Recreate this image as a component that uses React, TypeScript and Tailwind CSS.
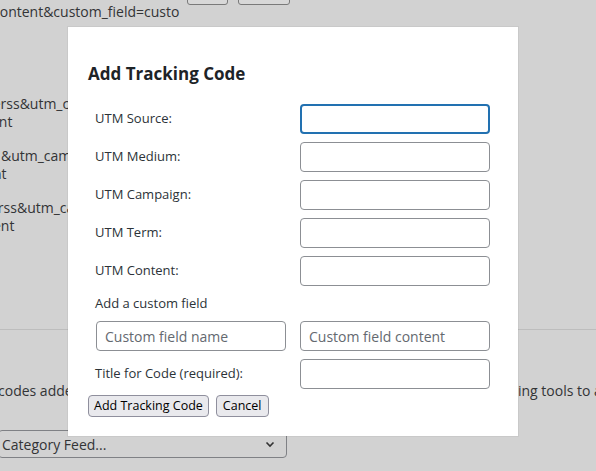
import React from "react";

const font = { fontFamily: '"Open Sans", "Noto Sans", sans-serif' };

const FieldRow = ({ label, focused }: { label: string; focused?: boolean }) => (
    <div className="flex items-center h-[30px]">
        <label className="w-[212px] shrink-0 pl-[7px] text-[13px] text-[#2c3338]">{label}</label>
        <input
            type="text"
            className={
                focused
                    ? "w-[190px] h-[30px] rounded-[4px] border-2 border-[#2271b1] bg-white outline-none"
                    : "w-[190px] h-[30px] rounded-[4px] border border-[#8c8f94] bg-white outline-none"
            }
        />
    </div>
);

const App = () => {
    return (
        <div className="relative w-[596px] h-[471px] overflow-hidden bg-[#d2d2d2] text-[#333436]" style={font}>
            {/* page behind the overlay */}
            <div className="flex items-end gap-[10px] h-[5px] ml-[187px]">
                <button className="w-[41px] h-[24px] rounded-[3px] border border-[#7a7a7a] bg-[#d8d8d8] text-[13px]">Copy</button>
                <button className="w-[52px] h-[24px] rounded-[3px] border border-[#7a7a7a] bg-[#d8d8d8] text-[13px]">Delete</button>
            </div>
            <div className="-ml-[7px] mt-[-2px] text-[14px] leading-[18px] whitespace-nowrap">content&amp;custom_field=custo</div>

            <div className="mt-[74px] flex flex-col gap-[16px] text-[14px] leading-[18px] whitespace-nowrap">
                <div className="-ml-[12px]">
                    <div>ferss&amp;utm_campaign=</div>
                    <div className="ml-[-2px]">tent</div>
                </div>
                <div className="ml-[1px]">
                    <div>&amp;utm_campaign=</div>
                    <div className="-ml-[8px]">nt</div>
                </div>
                <div className="-ml-[10px]">
                    <div>erss&amp;utm_campaign=</div>
                    <div className="ml-[-2px]">tent</div>
                </div>
            </div>

            <div className="mt-[94px] border-t border-[#bdbdbd]" />
            <div className="mt-[52px] flex text-[14px] leading-[18px] whitespace-nowrap">
                <span className="w-[518px] shrink-0 -ml-[2px]">codes added to</span>
                <span className="ml-[2px]">ing tools to add</span>
            </div>
            <div className="mt-[30px] w-[289px] h-[28px] -ml-[2px] flex items-center justify-between rounded-[4px] border border-[#7f8185] pr-[10px] text-[14px]">
                <span className="ml-[3px]">Category Feed...</span>
                <svg width="12" height="12" viewBox="0 0 12 12" fill="none" stroke="#333" strokeWidth="1.6">
                    <path d="M2.5 4.5 L6 8 L9.5 4.5" />
                </svg>
            </div>

            {/* modal */}
            <div className="absolute left-[68px] top-[27px] w-[450px] h-[409px] bg-white px-5 shadow-[0_0_0_1px_rgba(0,0,0,0.04)]">
                <h2 className="mt-[35px] text-[17px] leading-6 font-bold text-[#1d2327]">Add Tracking Code</h2>

                <form className="mt-[18px] flex flex-col">
                    <div className="flex flex-col gap-[8px]">
                        <FieldRow label="UTM Source:" focused />
                        <FieldRow label="UTM Medium:" />
                        <FieldRow label="UTM Campaign:" />
                        <FieldRow label="UTM Term:" />
                        <FieldRow label="UTM Content:" />
                    </div>

                    <div className="mt-[8px] h-[20px] flex items-center pl-[7px] text-[13px] text-[#2c3338]">Add a custom field</div>
                    <div className="mt-[7px] flex gap-[14px] pl-[8px]">
                        <input
                            type="text"
                            placeholder="Custom field name"
                            className="w-[190px] h-[30px] rounded-[4px] border border-[#8c8f94] px-[8px] text-[14px] placeholder:text-[#646970] outline-none"
                        />
                        <input
                            type="text"
                            placeholder="Custom field content"
                            className="w-[190px] h-[30px] rounded-[4px] border border-[#8c8f94] px-[8px] text-[14px] placeholder:text-[#646970] outline-none"
                        />
                    </div>

                    <div className="mt-[8px]">
                        <FieldRow label="Title for Code (required):" />
                    </div>

                    <div className="mt-[6px] flex gap-[7px]">
                        <button type="submit" className="h-[22px] px-[5px] rounded-[4px] border border-[#8f8f9d] bg-[#e9e9ed] text-[12.5px] leading-none text-black">
                            Add Tracking Code
                        </button>
                        <button type="button" className="h-[22px] px-[6px] rounded-[4px] border border-[#8f8f9d] bg-[#e9e9ed] text-[12.5px] leading-none text-black">
                            Cancel
                        </button>
                    </div>
                </form>
            </div>
        </div>
    );
};

export default App;
